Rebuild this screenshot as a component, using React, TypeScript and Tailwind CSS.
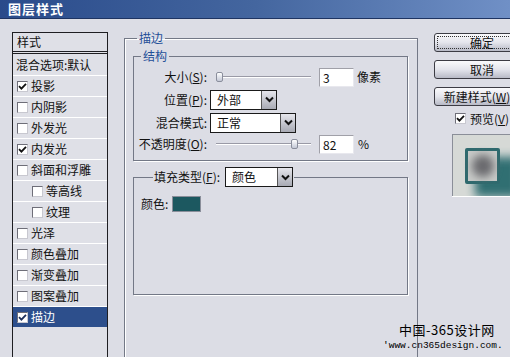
import type { ReactNode } from 'react'

const font = "font-['Noto_Sans_CJK_SC','Noto_Sans',sans-serif]"

function Check({ on, light }: { on?: boolean; light?: boolean }) {
  return (
    <span className="inline-flex w-[11px] h-[11px] shrink-0 items-center justify-center bg-white border border-t-[#6e6e78] border-l-[#6e6e78] border-r-[#c8c8d0] border-b-[#c8c8d0]">
      {on && (
        <svg width="9" height="9" viewBox="0 0 9 9">
          <path d="M1 4.2 L3.4 6.6 L8 1.8" fill="none" stroke={light ? '#1c2f5a' : '#111'} strokeWidth="1.8" />
        </svg>
      )}
    </span>
  )
}

const styles: { label: string; on?: boolean; indent?: boolean; selected?: boolean }[] = [
  { label: '投影', on: true },
  { label: '内阴影' },
  { label: '外发光' },
  { label: '内发光', on: true },
  { label: '斜面和浮雕' },
  { label: '等高线', indent: true },
  { label: '纹理', indent: true },
  { label: '光泽' },
  { label: '颜色叠加' },
  { label: '渐变叠加' },
  { label: '图案叠加' },
  { label: '描边', on: true, selected: true },
]

function Slider({ pos }: { pos: number }) {
  return (
    <div className="relative w-[95px] h-[10px] ml-[6px] shrink-0">
      <div className="absolute left-0 right-0 top-[4px] h-[2px] border-t border-[#9a9aa6] bg-white" />
      <div
        className="absolute top-0 w-[7px] h-[10px] rounded-[2px] border border-[#8a8e9c] bg-linear-to-b from-white to-[#c4c8d6]"
        style={{ left: pos }}
      />
    </div>
  )
}

function Field({ value }: { value: string }) {
  return (
    <div className="ml-[8px] w-[35px] h-[19px] shrink-0 bg-white border border-t-[#a0a0a8] border-l-[#a0a0a8] border-r-[#e8e8ee] border-b-[#e8e8ee] pl-[3px] text-[12px] leading-[17px]">
      {value}
    </div>
  )
}

function Select({ value, w }: { value: string; w: number }) {
  return (
    <div className="flex h-[20px] shrink-0 bg-white border border-[#1a1a1a]" style={{ width: w }}>
      <div className="flex-1 pl-[6px] text-[12px] leading-[18px]">{value}</div>
      <div className="w-[15px] flex items-center justify-center border-l border-[#555] bg-linear-to-b from-[#e6e6ec] to-[#a8aab4]">
        <svg width="9" height="7" viewBox="0 0 9 7">
          <path d="M1 1.5 L4.5 5 L8 1.5" fill="none" stroke="#111" strokeWidth="2" />
        </svg>
      </div>
    </div>
  )
}

function Row({ label, children, h }: { label: ReactNode; children: ReactNode; h: string }) {
  return (
    <div className={`flex items-center ${h}`}>
      <div className="w-[73px] shrink-0 text-right whitespace-nowrap text-[12px]">{label}</div>
      <div className="flex items-center ml-[3px]">{children}</div>
    </div>
  )
}

function Button({ children, focus }: { children: ReactNode; focus?: boolean }) {
  return (
    <div className="w-[96px] h-[19px] rounded-[3px] border border-[#3c3c44] bg-linear-to-b from-[#fafafc] via-[#e4e5ec] to-[#b8bac6] p-[2px]">
      <div className={`h-full flex items-center justify-center text-[12px] leading-none ${focus ? 'border border-dotted border-[#333]' : ''}`}>
        {children}
      </div>
    </div>
  )
}

export default function App() {
  return (
    <div className={`relative w-[510px] h-[357px] overflow-hidden bg-[#dcdde5] text-[#111] ${font}`}>
      <div className="h-[19px] flex items-center pl-[8px] bg-linear-to-r from-[#2a4b8b] via-[#44669f] to-[#7090c6] border-b border-[#1e3462]">
        <span className="text-white font-bold text-[13px] tracking-[1px]">图层样式</span>
      </div>

      <div className="flex">
        <div className="shrink-0 ml-[12px] mt-[13px] w-[96px] h-[340px] border-x border-t border-[#1e1e22] bg-[#dfe0e7] text-[12px]">
          <div className="h-[21px] flex items-center pl-[4px] border-b-[3px] border-double border-[#1e1e22]">样式</div>
          <div className="h-[21px] flex items-center pl-[3px] whitespace-nowrap">混合选项:默认</div>
          {styles.map((s) => (
            <div
              key={s.label}
              className={`h-[21px] flex items-center gap-[3px] border-t border-white ${s.indent ? 'pl-[19px]' : 'pl-[4px]'} ${s.selected ? 'bg-[#2d4f8c] text-white' : ''}`}
            >
              <Check on={s.on} light={s.selected} />
              <span>{s.label}</span>
            </div>
          ))}
        </div>

        <fieldset className="shrink-0 ml-[16px] mt-[12px] w-[294px] h-[340px] border border-[#737886] shadow-[inset_1px_1px_0_#fff] px-0 pt-0 pb-0">
          <legend className="ml-[12px] px-[2px] text-[12px] leading-[14px] text-[#1f4f98]">描边</legend>

          <fieldset className="ml-[8px] mt-[4px] w-[275px] h-[112px] border border-[#737886] shadow-[1px_1px_0_#fff] px-0 pt-0 pb-0">
            <legend className="ml-[7px] px-[2px] text-[12px] leading-[14px] text-[#1f4f98]">结构</legend>
            <div className="pt-[3px]">
              <Row h="h-[22px]" label={<>大小(<u>S</u>):</>}>
                <Slider pos={0} />
                <Field value="3" />
                <span className="ml-[3px] text-[12px]">像素</span>
              </Row>
              <Row h="h-[23px]" label={<>位置(<u>P</u>):</>}>
                <Select value="外部" w={67} />
              </Row>
              <Row h="h-[23px]" label="混合模式:">
                <Select value="正常" w={86} />
              </Row>
              <Row h="h-[20px]" label={<>不透明度(<u>O</u>):</>}>
                <Slider pos={75} />
                <Field value="82" />
                <span className="ml-[4px] text-[12px]">%</span>
              </Row>
            </div>
          </fieldset>

          <fieldset className="ml-[8px] mt-[6px] w-[275px] h-[128px] border border-[#737886] shadow-[1px_1px_0_#fff] px-0 pt-0 pb-0">
            <legend className="ml-[19px] flex items-center px-[1px]">
              <span className="text-[12px] whitespace-nowrap">填充类型(<u>F</u>):</span>
              <span className="ml-[5px]">
                <Select value="颜色" w={68} />
              </span>
            </legend>
            <div className="flex items-center mt-[8px] pl-[7px] text-[12px]">
              <span>颜色:</span>
              <span className="ml-[4px] w-[29px] h-[16px] bg-[#1c5860] border border-[#8a8e9a]" />
            </div>
          </fieldset>
        </fieldset>

        <div className="shrink-0 ml-[16px] mt-[14px] flex flex-col text-[12px]">
          <Button focus>确定</Button>
          <div className="h-[8px]" />
          <Button>取消</Button>
          <div className="h-[8px]" />
          <Button>
            <span className="whitespace-nowrap">新建样式(<u>W</u>)...</span>
          </Button>
          <div className="flex items-center gap-[4px] ml-[21px] mt-[6px] h-[13px]">
            <Check on />
            <span>预览(<u>V</u>)</span>
          </div>
          <div className="relative ml-[18px] mt-[9px] w-[80px] h-[62px] bg-[#d6d9d6] border-l border-t border-[#8a8e98] shadow-[0_1px_0_#fff] overflow-hidden">
            <div className="absolute left-[22px] top-[22px] w-[44px] h-[40px] bg-[#1f6468] blur-[5px] opacity-90" />
            <div className="absolute left-[12px] top-[13px] w-[35px] h-[36px] border-[3px] border-[#2f6a6e] rounded-[2px] bg-[#c8cac8] flex items-center justify-center">
              <div className="w-[22px] h-[22px] rounded-full bg-[#6a6a6e] blur-[4px]" />
            </div>
          </div>
        </div>
      </div>

      <div className="absolute left-[399px] top-[323px] text-[13px] leading-[14px] text-black tracking-[0.5px]">中国-365设计网</div>
      <div className="absolute left-[383px] top-[340px] font-['Liberation_Mono',monospace] text-[9.5px] leading-[11px] text-black">'www.cn365design.com.</div>
    </div>
  )
}
